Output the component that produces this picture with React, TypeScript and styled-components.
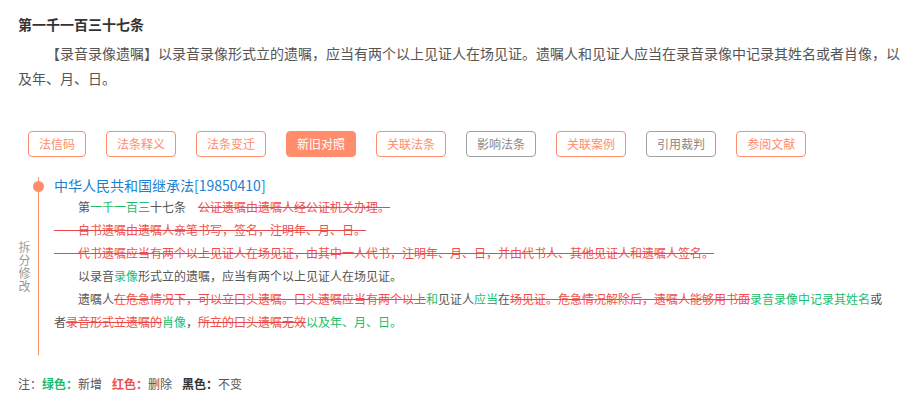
import * as React from 'react';
import styled, { createGlobalStyle, css } from 'styled-components';

const GlobalStyle = createGlobalStyle`
  body {
    margin: 0;
    background: #fff;
    font-family: "Noto Sans CJK SC", "Liberation Sans", sans-serif;
  }
`;

const ORANGE = '#ff8d6b';
const RED = '#ef4f4f';
const GREEN = '#19be6b';
const TEXT = '#555';
const INDENT = '\u3000\u3000';

const Page = styled.div`
  padding: 14px 6px 0 18px;
  color: ${TEXT};
`;

const ArticleTitle = styled.h3`
  margin: 0;
  font-size: 14px;
  line-height: 20px;
  font-weight: bold;
  color: #333;
`;

const ArticleText = styled.p`
  margin: 7px 0 0;
  font-size: 14px;
  line-height: 25px;
  text-indent: 2em;
  color: ${TEXT};
`;

const TabBar = styled.div`
  display: flex;
  gap: 20px;
  margin-top: 40px;
  padding-left: 10px;
`;

type Tone = 'orange' | 'gray';

const Tab = styled.div<{ $tone: Tone; $active?: boolean }>`
  box-sizing: border-box;
  height: 26px;
  padding: 0 10px;
  border: 1px solid ${(p) => (p.$tone === 'orange' ? ORANGE : '#a0a0a0')};
  border-radius: 4px;
  font-size: 12px;
  line-height: 24px;
  color: ${(p) => (p.$tone === 'orange' ? ORANGE : '#888')};
  cursor: pointer;
  ${(p) =>
    p.$active &&
    css`
      background: ${ORANGE};
      color: #fff;
    `}
`;

const Timeline = styled.div`
  display: flex;
  margin-top: 18px;
`;

const SideLabel = styled.div`
  width: 12px;
  align-self: center;
  writing-mode: vertical-rl;
  font-size: 12px;
  line-height: 12px;
  letter-spacing: 1px;
  color: #999;
  margin-top: 4px;
`;

const Rail = styled.div`
  position: relative;
  width: 24px;
  flex-shrink: 0;
  &::before {
    content: '';
    position: absolute;
    left: 8px;
    top: 2px;
    bottom: 0;
    width: 1px;
    background: ${ORANGE};
  }
`;

const Dot = styled.span`
  position: absolute;
  left: 3px;
  top: 6px;
  width: 11px;
  height: 11px;
  border-radius: 50%;
  background: ${ORANGE};
`;

const Content = styled.div`
  flex: 1;
  padding: 0 18px 22px 0;
`;

const LawTitle = styled.a`
  display: block;
  font-size: 14px;
  line-height: 20px;
  color: #1c7fd0;
  text-decoration: none;
`;

const DiffLine = styled.p<{ $indent?: boolean }>`
  margin: 0;
  font-size: 12px;
  line-height: 23px;
  color: ${TEXT};
  text-indent: ${(p) => (p.$indent ? '2em' : '0')};
`;

const Del = styled.del`
  color: ${RED};
  text-decoration: line-through;
  text-decoration-color: #e44848;
`;

const Add = styled.span`
  color: ${GREEN};
`;

const Legend = styled.div`
  margin-top: 19px;
  font-size: 12px;
  line-height: 20px;
  color: ${TEXT};
`;

const LegendKey = styled.b<{ $color: string }>`
  color: ${(p) => p.$color};
`;

const LegendItem = styled.span`
  & + & {
    margin-left: 10px;
  }
`;

const tabs: { label: string; tone: Tone; active?: boolean }[] = [
  { label: '法信码', tone: 'orange' },
  { label: '法条释义', tone: 'orange' },
  { label: '法条变迁', tone: 'orange' },
  { label: '新旧对照', tone: 'orange', active: true },
  { label: '关联法条', tone: 'orange' },
  { label: '影响法条', tone: 'gray' },
  { label: '关联案例', tone: 'orange' },
  { label: '引用裁判', tone: 'gray' },
  { label: '参阅文献', tone: 'orange' },
];

export default function App() {
  return (
    <Page>
      <GlobalStyle />
      <ArticleTitle>第一千一百三十七条</ArticleTitle>
      <ArticleText>
        【录音录像遗嘱】以录音录像形式立的遗嘱，应当有两个以上见证人在场见证。遗嘱人和见证人应当在录音录像中记录其姓名或者肖像，以及年、月、日。
      </ArticleText>

      <TabBar>
        {tabs.map((t) => (
          <Tab key={t.label} $tone={t.tone} $active={t.active}>
            {t.label}
          </Tab>
        ))}
      </TabBar>

      <Timeline>
        <SideLabel>拆分修改</SideLabel>
        <Rail>
          <Dot />
        </Rail>
        <Content>
          <LawTitle>中华人民共和国继承法[19850410]</LawTitle>
          <DiffLine $indent>
            第<Add>一千一百三</Add>十七条{'\u3000'}
            <Del>公证遗嘱由遗嘱人经公证机关办理。</Del>
          </DiffLine>
          <DiffLine>
            <Del>{INDENT + '自书遗嘱由遗嘱人亲笔书写，签名，注明年、月、日。'}</Del>
          </DiffLine>
          <DiffLine>
            <Del>
              {INDENT +
                '代书遗嘱应当有两个以上见证人在场见证，由其中一人代书，注明年、月、日，并由代书人、其他见证人和遗嘱人签名。'}
            </Del>
          </DiffLine>
          <DiffLine $indent>
            以录音<Add>录像</Add>形式立的遗嘱，应当有两个以上见证人在场见证。
          </DiffLine>
          <DiffLine $indent>
            遗嘱人<Del>在危急情况下，可以立口头遗嘱。口头遗嘱应当有两个以上</Del>
            <Add>和</Add>见证人<Add>应当</Add>在
            <Del>场见证。危急情况解除后，遗嘱人能够用书面</Del>
            <Add>录音录像中记录其姓名</Add>或者<Del>录音形式立遗嘱的</Del>
            <Add>肖像</Add>，<Del>所立的口头遗嘱无效</Del>
            <Add>以及年、月、日。</Add>
          </DiffLine>
        </Content>
      </Timeline>

      <Legend>
        <LegendItem>
          注：<LegendKey $color={GREEN}>绿色：</LegendKey>新增
        </LegendItem>
        <LegendItem>
          <LegendKey $color={RED}>红色：</LegendKey>删除
        </LegendItem>
        <LegendItem>
          <LegendKey $color="#333">黑色：</LegendKey>不变
        </LegendItem>
      </Legend>
    </Page>
  );
}
